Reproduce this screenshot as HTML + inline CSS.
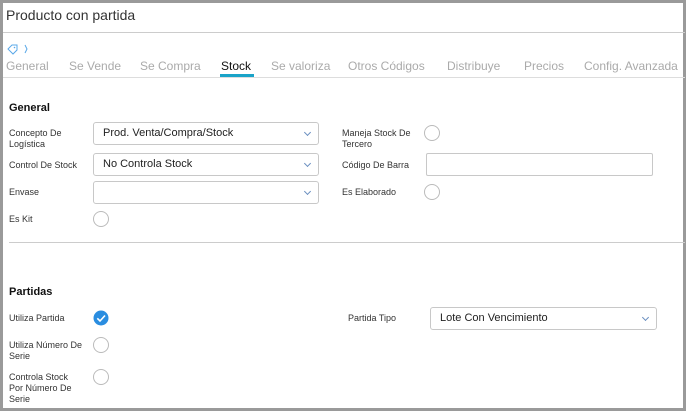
<!DOCTYPE html>
<html><head><meta charset="utf-8"><style>
*{box-sizing:border-box;margin:0;padding:0}
body{width:690px;height:414px;background:#fff;position:relative;overflow:hidden;font-family:"Liberation Sans",sans-serif;color:#222}
.box{position:absolute;left:0;top:0;width:686px;height:411px;border:3px solid #9a9a9a;border-right-width:3px}
.a{position:absolute}
.lbl{position:absolute;font-size:9px;line-height:11px;color:#333}
.sel{position:absolute;border:1px solid #c8c8c8;border-radius:3px;font-size:11px;line-height:20px;padding-left:9px;color:#222;background:#fff}
.sel:after{content:"";position:absolute;right:8px;top:7px;width:4px;height:4px;border-right:1px solid #6a8fc0;border-bottom:1px solid #6a8fc0;transform:rotate(45deg)}
.rad{position:absolute;width:16px;height:16px;border:1px solid #bbb;border-radius:50%}
.tab{position:absolute;top:59px;font-size:12px;color:#aaa}
h3{position:absolute;font-size:11px;font-weight:bold;color:#111}
</style></head><body>
<div class="box"></div>
<div class="a" style="left:6px;top:7px;font-size:14px;color:#333">Producto con partida</div>
<div class="a" style="left:3px;top:32px;width:682px;height:1px;background:#ccc"></div>
<svg class="a" style="left:6px;top:43px" width="24" height="12"><path d="M2 6 L6 2 L11 2 L11 7 L7 11 Z" fill="none" stroke="#5aa8e8" stroke-width="1"/><circle cx="8.5" cy="4.5" r="0.8" fill="#5aa8e8"/><path d="M19 2 L21 6 L19 10" fill="none" stroke="#5aa8e8" stroke-width="1"/></svg>
<div class="tab" style="left:6px">General</div>
<div class="tab" style="left:69px">Se Vende</div>
<div class="tab" style="left:140px">Se Compra</div>
<div class="tab" style="left:221px;color:#111">Stock</div>
<div class="tab" style="left:271px">Se valoriza</div>
<div class="tab" style="left:348px">Otros Códigos</div>
<div class="tab" style="left:447px">Distribuye</div>
<div class="tab" style="left:524px">Precios</div>
<div class="tab" style="left:584px">Config. Avanzada</div>
<div class="a" style="left:3px;top:77px;width:682px;height:1px;background:#ddd"></div>
<div class="a" style="left:220px;top:74px;width:34px;height:3px;background:#1aa3c8"></div>
<h3 style="left:9px;top:102px">General</h3>
<div class="lbl" style="left:9px;top:128px">Concepto De<br>Logística</div>
<div class="sel" style="left:93px;top:122px;width:226px;height:23px">Prod. Venta/Compra/Stock</div>
<div class="lbl" style="left:9px;top:160px">Control De Stock</div>
<div class="sel" style="left:93px;top:153px;width:226px;height:23px">No Controla Stock</div>
<div class="lbl" style="left:9px;top:187px">Envase</div>
<div class="sel" style="left:93px;top:181px;width:226px;height:23px"></div>
<div class="lbl" style="left:9px;top:214px">Es Kit</div>
<div class="rad" style="left:93px;top:211px"></div>
<div class="lbl" style="left:342px;top:128px">Maneja Stock De<br>Tercero</div>
<div class="rad" style="left:424px;top:125px"></div>
<div class="lbl" style="left:342px;top:160px">Código De Barra</div>
<div class="a" style="left:426px;top:153px;width:227px;height:23px;border:1px solid #c8c8c8;border-radius:2px"></div>
<div class="lbl" style="left:342px;top:187px">Es Elaborado</div>
<div class="rad" style="left:424px;top:184px"></div>
<div class="a" style="left:9px;top:242px;width:676px;height:1px;background:#ccc"></div>
<h3 style="left:9px;top:286px">Partidas</h3>
<div class="lbl" style="left:9px;top:313px">Utiliza Partida</div>
<svg class="a" style="left:93px;top:310px" width="16" height="16"><circle cx="8" cy="8" r="7.5" fill="#2a8de0"/><path d="M4.3 8.3 L7 11 L12 5.5" fill="none" stroke="#fff" stroke-width="1.6"/></svg>
<div class="lbl" style="left:9px;top:340px">Utiliza Número De<br>Serie</div>
<div class="rad" style="left:93px;top:337px"></div>
<div class="lbl" style="left:9px;top:372px">Controla Stock<br>Por Número De<br>Serie</div>
<div class="rad" style="left:93px;top:369px"></div>
<div class="lbl" style="left:348px;top:313px">Partida Tipo</div>
<div class="sel" style="left:430px;top:307px;width:227px;height:23px">Lote Con Vencimiento</div>
</body></html>
